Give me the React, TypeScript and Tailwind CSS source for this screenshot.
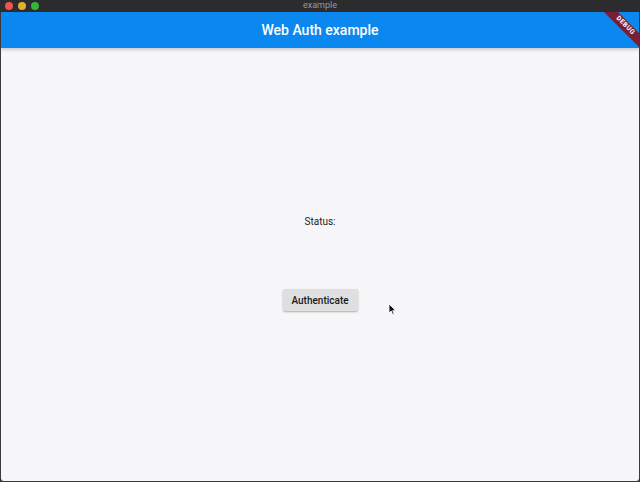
export default function App() {
  return (
    <div className="w-[640px] h-[482px] flex flex-col bg-[#3a3a3c] overflow-hidden relative" style={{ fontFamily: 'Roboto, "Liberation Sans", Arial, sans-serif' }}>
      {/* title bar */}
      <div className="h-[12px] bg-[#2c2b2d] flex items-center relative">
        <div className="flex gap-[5px] pl-[5px]">
          <span className="w-[8px] h-[8px] rounded-full bg-[#f0544c]" />
          <span className="w-[8px] h-[8px] rounded-full bg-[#e6ad2f]" />
          <span className="w-[8px] h-[8px] rounded-full bg-[#34b63a]" />
        </div>
        <div className="absolute inset-0 flex items-center justify-center text-[9px] text-[#9a999b]">example</div>
      </div>

      <div className="flex-1 flex flex-col mx-[1px] mb-[1px] rounded-b-[3px] overflow-hidden relative">
        {/* app bar */}
        <div className="h-[36px] bg-[#0b88ef] flex items-center justify-center shadow-[0_2px_3px_rgba(0,0,0,0.18)] z-10">
          <span className="text-white text-[14px] font-medium">Web Auth example</span>
        </div>

        {/* body */}
        <div className="flex-1 bg-[#f7f6f8] flex flex-col items-center">
          <div className="mt-[166px] text-[10px] text-[#1c1c1c]">Status:</div>
          <button className="mt-[60px] w-[75px] h-[22px] bg-[#e0dfe0] rounded-[2px] shadow-[0_1px_2px_rgba(0,0,0,0.3)] text-[10px] font-medium text-[#1a1a1a]">
            Authenticate
          </button>
        </div>

        {/* debug banner */}
        <div className="absolute top-0 right-0 w-[40px] h-[40px] overflow-hidden z-20">
          <div className="absolute top-[9px] left-[-3px] w-[58px] h-[10px] bg-[#7d1d33] rotate-45 flex items-center justify-center">
            <span className="text-white text-[6.5px] font-bold tracking-[0.5px]">DEBUG</span>
          </div>
        </div>
      </div>

      {/* cursor */}
      <svg className="absolute left-[388px] top-[303px]" width="9" height="13" viewBox="0 0 9 13">
        <path d="M1 1 L1 10 L3.2 8 L4.8 11.5 L6.2 10.9 L4.7 7.6 L7.6 7.6 Z" fill="#111" stroke="#fff" strokeWidth="0.8" />
      </svg>
    </div>
  );
}
